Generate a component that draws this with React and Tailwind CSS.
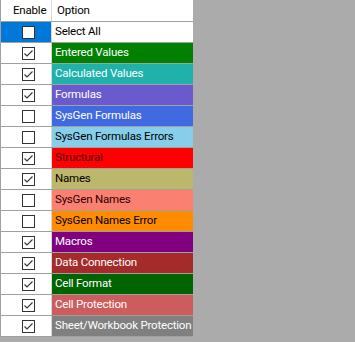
import React from "react";

const rows = [
  { label: "Entered Values", bg: "bg-[#008000]", fg: "text-white", on: true },
  { label: "Calculated Values", bg: "bg-[#20b2aa]", fg: "text-white", on: true },
  { label: "Formulas", bg: "bg-[#6a5acd]", fg: "text-white", on: true },
  { label: "SysGen Formulas", bg: "bg-[#4169e1]", fg: "text-white", on: false },
  { label: "SysGen Formulas Errors", bg: "bg-[#87ceeb]", fg: "text-black", on: false },
  { label: "Structural", bg: "bg-[#ff0000]", fg: "text-[#4a0000]", on: true },
  { label: "Names", bg: "bg-[#bdb76b]", fg: "text-black", on: true },
  { label: "SysGen Names", bg: "bg-[#fa8072]", fg: "text-[#2a0000]", on: false },
  { label: "SysGen Names Error", bg: "bg-[#ff8c00]", fg: "text-black", on: false },
  { label: "Macros", bg: "bg-[#800080]", fg: "text-white", on: true },
  { label: "Data Connection", bg: "bg-[#a52a2a]", fg: "text-white", on: true },
  { label: "Cell Format", bg: "bg-[#006400]", fg: "text-white", on: true },
  { label: "Cell Protection", bg: "bg-[#cd5c5c]", fg: "text-white", on: true },
  { label: "Sheet/Workbook Protection", bg: "bg-[#808080]", fg: "text-white", on: true },
];

function Box({ on }) {
  return (
    <div className="w-[13px] h-[13px] border border-[#333333] bg-white flex items-center justify-center">
      {on && (
        <svg width="11" height="11" viewBox="0 0 11 11">
          <polyline
            points="1.5,5.5 4,8 9.5,2.5"
            fill="none"
            stroke="#333333"
            strokeWidth="1.1"
          />
        </svg>
      )}
    </div>
  );
}

export default function App() {
  return (
    <div
      className="w-[355px] h-[342px] bg-[#ababab] overflow-hidden text-[11.5px] tracking-[-0.2px] leading-none"
      style={{ fontFamily: 'Roboto, "Liberation Sans", sans-serif' }}
    >
      <div className="w-[193px] flex flex-col border-l border-[#a0a0a0] bg-white">
        <div className="flex h-[22px] border-b border-[#a0a0a0] text-black">
          <div className="w-[51px] border-r border-[#d8d8d8] flex items-center pl-[12px]">Enable</div>
          <div className="flex-1 flex items-center pl-[5px]">Option</div>
        </div>
        <div className="flex h-[21px] border-b border-[#a0a0a0]">
          <div className="w-[51px] border-r border-[#d8d8d8] bg-[#0078d7] flex items-center pl-[21px]">
            <Box on={false} />
          </div>
          <div className="flex-1 flex items-center pl-[3px] text-black whitespace-nowrap">Select All</div>
        </div>
        {rows.map((r) => (
          <div key={r.label} className="flex h-[21px] border-b border-[#a0a0a0]">
            <div className="w-[51px] border-r border-[#d8d8d8] flex items-center pl-[21px]">
              <Box on={r.on} />
            </div>
            <div className={`flex-1 flex items-center pl-[3px] whitespace-nowrap overflow-hidden ${r.bg} ${r.fg}`}>
              {r.label}
            </div>
          </div>
        ))}
      </div>
    </div>
  );
}
